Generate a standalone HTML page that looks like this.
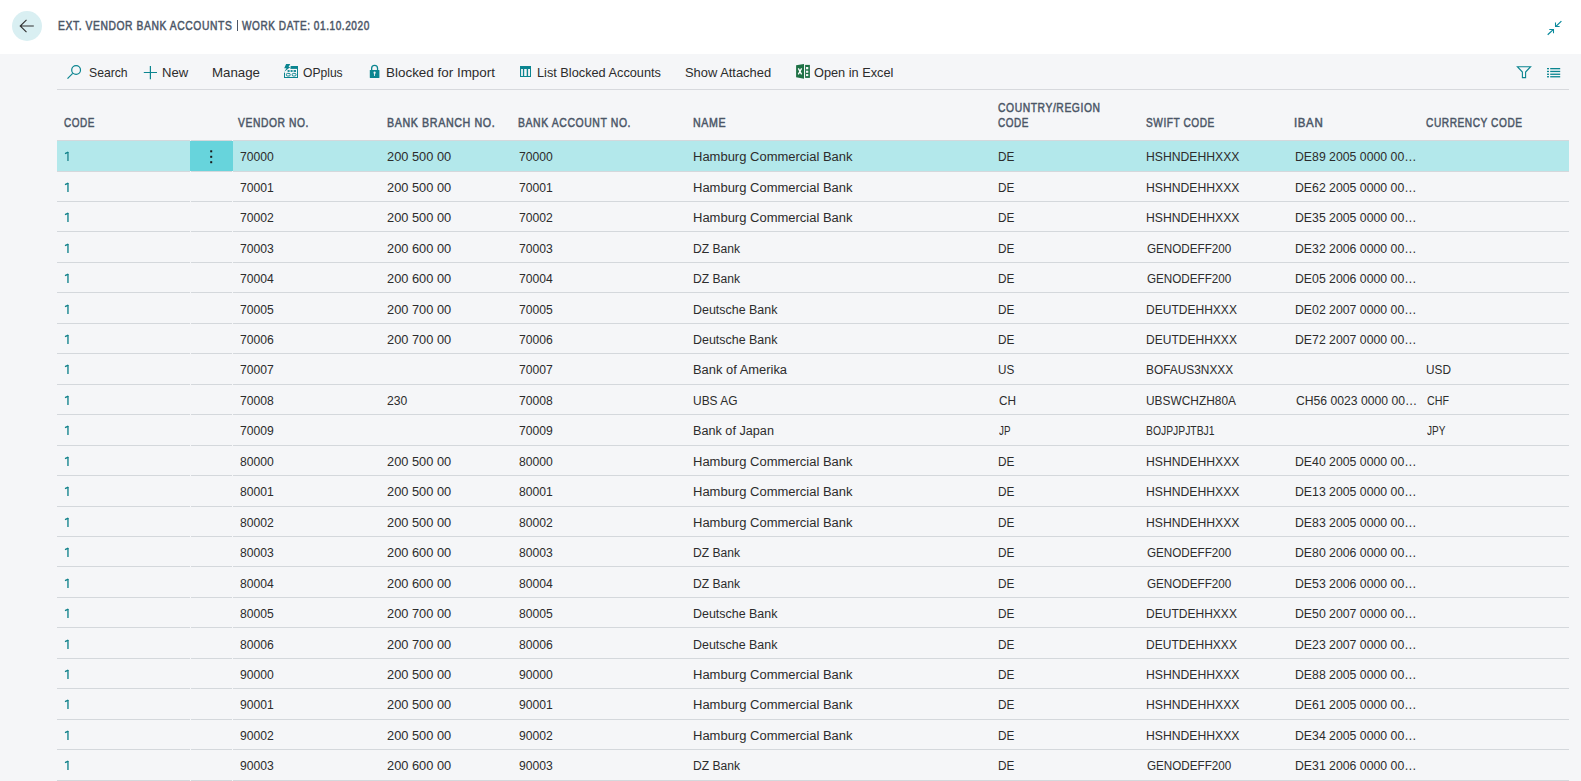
<!DOCTYPE html>
<html><head><meta charset="utf-8"><title>Ext. Vendor Bank Accounts</title>
<style>
html,body{margin:0;padding:0}
body{width:1581px;height:781px;overflow:hidden;position:relative;background:#f5f6f8;font-family:"Liberation Sans",sans-serif;}
.a{position:absolute;white-space:nowrap}
.hdrbar{position:absolute;left:0;top:0;width:1581px;height:54px;background:#fff}
.t{position:absolute;white-space:nowrap;font-size:12.5px;line-height:14px;color:#2c2c2c;transform-origin:0 0}
.lk{position:absolute;white-space:nowrap;font-size:12.5px;line-height:14px;color:#23888f}
.h{position:absolute;white-space:nowrap;font-size:12.5px;line-height:14px;color:#4b5667;font-weight:normal;-webkit-text-stroke:0.5px #4b5667;letter-spacing:0.7px;transform-origin:0 0}
.tb{position:absolute;white-space:nowrap;font-size:13px;line-height:15px;color:#2c2c2c;transform-origin:0 0}
.ln{position:absolute;height:1px;background:#d4d8dc}
svg{position:absolute;overflow:visible}
</style></head><body>
<div class="hdrbar"></div>

<div class="a" style="left:12px;top:11px;width:30px;height:30px;border-radius:50%;background:#d9eff2"></div>
<svg style="left:0;top:0" width="60" height="54"><path d="M26.5 19.8 L20.2 26 L26.5 32.2 M20.2 26 H33.8" fill="none" stroke="#323232" stroke-width="1.1"/></svg>
<div class="h" style="left:57.90px;top:19.00px;transform:scaleX(0.8251)">EXT. VENDOR BANK ACCOUNTS</div>
<div class="h" style="left:242.00px;top:19.00px;transform:scaleX(0.8038)">WORK DATE: 01.10.2020</div>
<div class="a" style="left:236.8px;top:20.2px;width:1.3px;height:10.6px;background:#4b5667"></div>
<svg style="left:0;top:0" width="1581" height="54"><g fill="none" stroke="#0a8a9c" stroke-width="1.25"><path d="M1561.4 21.1 L1555.9 26.4 M1547.7 34.7 L1553.2 29.6"/></g><g fill="none" stroke="#0a8a9c" stroke-width="1.05"><path d="M1555.5 22.6 V26.5 H1559.6 M1549.3 29.5 H1553.5 V33.2"/></g></svg>
<div class="tb" style="left:89.36px;top:65.00px;transform:scaleX(0.9375)">Search</div>
<div class="tb" style="left:161.99px;top:65.00px;transform:scaleX(1.0080)">New</div>
<div class="tb" style="left:212.18px;top:65.00px;transform:scaleX(1.0217)">Manage</div>
<div class="tb" style="left:302.70px;top:65.00px;transform:scaleX(0.9302)">OPplus</div>
<div class="tb" style="left:386.37px;top:65.00px;transform:scaleX(1.0333)">Blocked for Import</div>
<div class="tb" style="left:537.22px;top:65.00px;transform:scaleX(0.9800)">List Blocked Accounts</div>
<div class="tb" style="left:685.01px;top:65.00px;transform:scaleX(0.9929)">Show Attached</div>
<div class="tb" style="left:814.10px;top:65.00px;transform:scaleX(0.9812)">Open in Excel</div>
<svg style="left:0;top:0" width="1581" height="100">
<g fill="none" stroke="#0b8590" stroke-width="1.2">
<circle cx="76.1" cy="70" r="4.4"/>
<path d="M67.5 78.6 L72.7 73.4"/>
<path d="M143.8 72.5 H157 M150.4 65.9 V79.2"/>
</g>
<!-- OPplus icon -->
<g fill="#0b8590">
<rect x="290.4" y="66" width="7.6" height="2.9"/>
<rect x="297" y="66" width="1" height="12"/>
<rect x="284" y="77" width="14" height="1"/>
<rect x="284" y="72.6" width="1" height="5.4"/>
<rect x="287.6" y="70.1" width="2" height="1.8"/><rect x="290.6" y="70.1" width="2" height="1.8"/><rect x="293.6" y="70.1" width="2.4" height="1.8"/>
</g>
<g fill="none" stroke="#0b8590" stroke-width="1">
<rect x="286.4" y="73.4" width="3.8" height="2.6" rx="1.1"/><rect x="292.2" y="73.4" width="3.8" height="2.6" rx="1.1"/>
</g>
<path d="M286.1 64 H290.3 L288.5 66.9 H290.4 L284.3 71.8 L286.5 68.2 H284.2 Z" fill="#0b8590" stroke="#f5f6f8" stroke-width="0.8" paint-order="stroke" stroke-linejoin="round"/>
<!-- lock -->
<path d="M371.65 70.2 V68.3 A2.95 2.95 0 0 1 377.55 68.3 V70.2" fill="none" stroke="#0b8590" stroke-width="1.3"/>
<rect x="369.8" y="70" width="9.6" height="8" rx="0.6" fill="#0b8590"/>
<circle cx="374.6" cy="72.7" r="1.1" fill="#f5f6f8"/>
<path d="M374.1 72.7 H375.1 L375 76 H374.2 Z" fill="#f5f6f8"/>
<!-- list blocked icon -->
<rect x="520" y="66" width="11" height="11" fill="#0b8590"/>
<g fill="#f5f6f8"><rect x="521.1" y="69" width="1.8" height="7"/><rect x="524.2" y="69" width="2.5" height="7"/><rect x="528.1" y="69" width="1.9" height="7"/></g>
<!-- excel -->
<path d="M796.1 65.2 L804 64 V78.7 L796.1 77.3 Z" fill="#1e7145"/>
<rect x="805.1" y="64.9" width="4.8" height="13" fill="#1e7145"/>
<g fill="#f5f6f8"><rect x="806" y="67" width="2.3" height="2.3"/><rect x="806" y="70.7" width="2.3" height="2.1"/><rect x="806" y="74.1" width="2.3" height="2"/></g>
<path d="M798.3 68.4 L801.6 74.4 M801.6 68.4 L798.3 74.4" stroke="#fff" stroke-width="1.3"/>
<!-- filter -->
<path d="M1517.4 66.7 H1530.6 L1525.6 72 V77.6 H1522.4 V72 Z" fill="none" stroke="#0b8590" stroke-width="1.1" stroke-linejoin="miter"/>
<!-- list -->
<g fill="#0b8590">
<rect x="1547" y="68" width="2" height="1.3"/><rect x="1550.2" y="68" width="10" height="1.3"/>
<rect x="1547" y="70.8" width="2" height="1.3"/><rect x="1550.2" y="70.8" width="10" height="1.3"/>
<rect x="1547" y="73.6" width="2" height="1.3"/><rect x="1550.2" y="73.6" width="10" height="1.3"/>
<rect x="1547" y="76.1" width="2" height="1.3"/><rect x="1550.2" y="76.1" width="10" height="1.3"/>
</g>
</svg>
<div class="ln" style="left:57px;top:89px;width:1512px;background:#d7d9dd"></div>
<div class="h" style="left:63.50px;top:115.90px;transform:scaleX(0.7949)">CODE</div>
<div class="h" style="left:238.00px;top:115.90px;transform:scaleX(0.8235)">VENDOR NO.</div>
<div class="h" style="left:386.50px;top:115.90px;transform:scaleX(0.8560)">BANK BRANCH NO.</div>
<div class="h" style="left:517.60px;top:115.90px;transform:scaleX(0.8358)">BANK ACCOUNT NO.</div>
<div class="h" style="left:692.50px;top:115.90px;transform:scaleX(0.8513)">NAME</div>
<div class="h" style="left:997.60px;top:101.20px;transform:scaleX(0.8260)">COUNTRY/REGION</div>
<div class="h" style="left:997.60px;top:115.90px;transform:scaleX(0.7949)">CODE</div>
<div class="h" style="left:1146.00px;top:115.90px;transform:scaleX(0.8082)">SWIFT CODE</div>
<div class="h" style="left:1293.68px;top:115.90px;transform:scaleX(0.9167)">IBAN</div>
<div class="h" style="left:1425.50px;top:115.90px;transform:scaleX(0.8101)">CURRENCY CODE</div>
<div class="ln" style="left:57px;top:140px;width:133px"></div><div class="ln" style="left:191px;top:140px;width:41px"></div><div class="ln" style="left:233px;top:140px;width:1336px"></div>
<div class="a" style="left:57px;top:141px;width:1512px;height:30px;background:#b3e8eb"></div>
<div class="a" style="left:190px;top:141px;width:43px;height:30px;background:#67d4dc"></div>
<svg style="left:0;top:0" width="300" height="200"><g fill="#1a1a1a"><rect x="210.2" y="150.3" width="2" height="2"/><rect x="210.2" y="155.8" width="2" height="2"/><rect x="210.2" y="161.2" width="2" height="2"/></g></svg>
<div class="ln" style="left:57px;top:171px;width:133px"></div><div class="ln" style="left:191px;top:171px;width:41px"></div><div class="ln" style="left:233px;top:171px;width:1336px"></div>
<div class="t" style="left:239.50px;top:149.70px;transform:scaleX(0.9714)">70000</div>
<div class="t" style="left:387.10px;top:149.70px;transform:scaleX(1.0258)">200 500 00</div>
<div class="t" style="left:518.50px;top:149.70px;transform:scaleX(0.9714)">70000</div>
<div class="t" style="left:692.96px;top:149.70px;transform:scaleX(1.0392)">Hamburg Commercial Bank</div>
<div class="t" style="left:997.56px;top:149.70px;transform:scaleX(0.9437)">DE</div>
<div class="t" style="left:1145.53px;top:149.70px;transform:scaleX(0.9747)">HSHNDEHHXXX</div>
<div class="t" style="left:1295.32px;top:149.70px;transform:scaleX(0.9820)">DE89 2005 0000 00…</div>
<div class="ln" style="left:57px;top:201px;width:133px"></div><div class="ln" style="left:191px;top:201px;width:41px"></div><div class="ln" style="left:233px;top:201px;width:1336px"></div>
<div class="t" style="left:239.50px;top:180.70px;transform:scaleX(0.9714)">70001</div>
<div class="t" style="left:387.10px;top:180.70px;transform:scaleX(1.0258)">200 500 00</div>
<div class="t" style="left:518.50px;top:180.70px;transform:scaleX(0.9714)">70001</div>
<div class="t" style="left:692.96px;top:180.70px;transform:scaleX(1.0392)">Hamburg Commercial Bank</div>
<div class="t" style="left:997.56px;top:180.70px;transform:scaleX(0.9437)">DE</div>
<div class="t" style="left:1145.53px;top:180.70px;transform:scaleX(0.9747)">HSHNDEHHXXX</div>
<div class="t" style="left:1295.32px;top:180.70px;transform:scaleX(0.9820)">DE62 2005 0000 00…</div>
<div class="ln" style="left:57px;top:231px;width:133px"></div><div class="ln" style="left:191px;top:231px;width:41px"></div><div class="ln" style="left:233px;top:231px;width:1336px"></div>
<div class="t" style="left:239.50px;top:210.70px;transform:scaleX(0.9714)">70002</div>
<div class="t" style="left:387.10px;top:210.70px;transform:scaleX(1.0258)">200 500 00</div>
<div class="t" style="left:518.50px;top:210.70px;transform:scaleX(0.9714)">70002</div>
<div class="t" style="left:692.96px;top:210.70px;transform:scaleX(1.0392)">Hamburg Commercial Bank</div>
<div class="t" style="left:997.56px;top:210.70px;transform:scaleX(0.9437)">DE</div>
<div class="t" style="left:1145.53px;top:210.70px;transform:scaleX(0.9747)">HSHNDEHHXXX</div>
<div class="t" style="left:1295.32px;top:210.70px;transform:scaleX(0.9820)">DE35 2005 0000 00…</div>
<div class="ln" style="left:57px;top:262px;width:133px"></div><div class="ln" style="left:191px;top:262px;width:41px"></div><div class="ln" style="left:233px;top:262px;width:1336px"></div>
<div class="t" style="left:239.50px;top:241.70px;transform:scaleX(0.9714)">70003</div>
<div class="t" style="left:387.10px;top:241.70px;transform:scaleX(1.0258)">200 600 00</div>
<div class="t" style="left:518.50px;top:241.70px;transform:scaleX(0.9714)">70003</div>
<div class="t" style="left:693.03px;top:241.70px;transform:scaleX(0.9688)">DZ Bank</div>
<div class="t" style="left:997.56px;top:241.70px;transform:scaleX(0.9437)">DE</div>
<div class="t" style="left:1146.50px;top:241.70px;transform:scaleX(0.9333)">GENODEFF200</div>
<div class="t" style="left:1295.32px;top:241.70px;transform:scaleX(0.9820)">DE32 2006 0000 00…</div>
<div class="ln" style="left:57px;top:292px;width:133px"></div><div class="ln" style="left:191px;top:292px;width:41px"></div><div class="ln" style="left:233px;top:292px;width:1336px"></div>
<div class="t" style="left:239.50px;top:271.70px;transform:scaleX(0.9714)">70004</div>
<div class="t" style="left:387.10px;top:271.70px;transform:scaleX(1.0258)">200 600 00</div>
<div class="t" style="left:518.50px;top:271.70px;transform:scaleX(0.9714)">70004</div>
<div class="t" style="left:693.03px;top:271.70px;transform:scaleX(0.9688)">DZ Bank</div>
<div class="t" style="left:997.56px;top:271.70px;transform:scaleX(0.9437)">DE</div>
<div class="t" style="left:1146.50px;top:271.70px;transform:scaleX(0.9333)">GENODEFF200</div>
<div class="t" style="left:1295.32px;top:271.70px;transform:scaleX(0.9820)">DE05 2006 0000 00…</div>
<div class="ln" style="left:57px;top:323px;width:133px"></div><div class="ln" style="left:191px;top:323px;width:41px"></div><div class="ln" style="left:233px;top:323px;width:1336px"></div>
<div class="t" style="left:239.50px;top:302.70px;transform:scaleX(0.9714)">70005</div>
<div class="t" style="left:387.10px;top:302.70px;transform:scaleX(1.0258)">200 700 00</div>
<div class="t" style="left:518.50px;top:302.70px;transform:scaleX(0.9714)">70005</div>
<div class="t" style="left:693.00px;top:302.70px;transform:scaleX(0.9952)">Deutsche Bank</div>
<div class="t" style="left:997.56px;top:302.70px;transform:scaleX(0.9437)">DE</div>
<div class="t" style="left:1145.54px;top:302.70px;transform:scaleX(0.9624)">DEUTDEHHXXX</div>
<div class="t" style="left:1295.32px;top:302.70px;transform:scaleX(0.9820)">DE02 2007 0000 00…</div>
<div class="ln" style="left:57px;top:353px;width:133px"></div><div class="ln" style="left:191px;top:353px;width:41px"></div><div class="ln" style="left:233px;top:353px;width:1336px"></div>
<div class="t" style="left:239.50px;top:332.70px;transform:scaleX(0.9714)">70006</div>
<div class="t" style="left:387.10px;top:332.70px;transform:scaleX(1.0258)">200 700 00</div>
<div class="t" style="left:518.50px;top:332.70px;transform:scaleX(0.9714)">70006</div>
<div class="t" style="left:693.00px;top:332.70px;transform:scaleX(0.9952)">Deutsche Bank</div>
<div class="t" style="left:997.56px;top:332.70px;transform:scaleX(0.9437)">DE</div>
<div class="t" style="left:1145.54px;top:332.70px;transform:scaleX(0.9624)">DEUTDEHHXXX</div>
<div class="t" style="left:1295.32px;top:332.70px;transform:scaleX(0.9820)">DE72 2007 0000 00…</div>
<div class="ln" style="left:57px;top:384px;width:133px"></div><div class="ln" style="left:191px;top:384px;width:41px"></div><div class="ln" style="left:233px;top:384px;width:1336px"></div>
<div class="t" style="left:239.50px;top:362.70px;transform:scaleX(0.9714)">70007</div>
<div class="t" style="left:518.50px;top:362.70px;transform:scaleX(0.9714)">70007</div>
<div class="t" style="left:692.97px;top:362.70px;transform:scaleX(1.0333)">Bank of Amerika</div>
<div class="t" style="left:997.56px;top:362.70px;transform:scaleX(0.9375)">US</div>
<div class="t" style="left:1145.55px;top:362.70px;transform:scaleX(0.9505)">BOFAUS3NXXX</div>
<div class="t" style="left:1426.46px;top:362.70px;transform:scaleX(0.9440)">USD</div>
<div class="ln" style="left:57px;top:414px;width:133px"></div><div class="ln" style="left:191px;top:414px;width:41px"></div><div class="ln" style="left:233px;top:414px;width:1336px"></div>
<div class="t" style="left:239.50px;top:393.70px;transform:scaleX(0.9714)">70008</div>
<div class="t" style="left:387.10px;top:393.70px;transform:scaleX(0.9714)">230</div>
<div class="t" style="left:518.50px;top:393.70px;transform:scaleX(0.9714)">70008</div>
<div class="t" style="left:693.04px;top:393.70px;transform:scaleX(0.9556)">UBS AG</div>
<div class="t" style="left:998.50px;top:393.70px;transform:scaleX(0.9412)">CH</div>
<div class="t" style="left:1145.55px;top:393.70px;transform:scaleX(0.9521)">UBSWCHZH80A</div>
<div class="t" style="left:1296.30px;top:393.70px;transform:scaleX(0.9740)">CH56 0023 0000 00…</div>
<div class="t" style="left:1427.40px;top:393.70px;transform:scaleX(0.8538)">CHF</div>
<div class="ln" style="left:57px;top:445px;width:133px"></div><div class="ln" style="left:191px;top:445px;width:41px"></div><div class="ln" style="left:233px;top:445px;width:1336px"></div>
<div class="t" style="left:239.50px;top:423.70px;transform:scaleX(0.9714)">70009</div>
<div class="t" style="left:518.50px;top:423.70px;transform:scaleX(0.9714)">70009</div>
<div class="t" style="left:692.99px;top:423.70px;transform:scaleX(1.0127)">Bank of Japan</div>
<div class="t" style="left:998.50px;top:423.70px;transform:scaleX(0.7857)">JP</div>
<div class="t" style="left:1145.67px;top:423.70px;transform:scaleX(0.8293)">BOJPJPJTBJ1</div>
<div class="t" style="left:1427.40px;top:423.70px;transform:scaleX(0.8043)">JPY</div>
<div class="ln" style="left:57px;top:475px;width:133px"></div><div class="ln" style="left:191px;top:475px;width:41px"></div><div class="ln" style="left:233px;top:475px;width:1336px"></div>
<div class="t" style="left:239.50px;top:454.70px;transform:scaleX(0.9714)">80000</div>
<div class="t" style="left:387.10px;top:454.70px;transform:scaleX(1.0258)">200 500 00</div>
<div class="t" style="left:518.50px;top:454.70px;transform:scaleX(0.9714)">80000</div>
<div class="t" style="left:692.96px;top:454.70px;transform:scaleX(1.0392)">Hamburg Commercial Bank</div>
<div class="t" style="left:997.56px;top:454.70px;transform:scaleX(0.9437)">DE</div>
<div class="t" style="left:1145.53px;top:454.70px;transform:scaleX(0.9747)">HSHNDEHHXXX</div>
<div class="t" style="left:1295.32px;top:454.70px;transform:scaleX(0.9820)">DE40 2005 0000 00…</div>
<div class="ln" style="left:57px;top:506px;width:133px"></div><div class="ln" style="left:191px;top:506px;width:41px"></div><div class="ln" style="left:233px;top:506px;width:1336px"></div>
<div class="t" style="left:239.50px;top:484.70px;transform:scaleX(0.9714)">80001</div>
<div class="t" style="left:387.10px;top:484.70px;transform:scaleX(1.0258)">200 500 00</div>
<div class="t" style="left:518.50px;top:484.70px;transform:scaleX(0.9714)">80001</div>
<div class="t" style="left:692.96px;top:484.70px;transform:scaleX(1.0392)">Hamburg Commercial Bank</div>
<div class="t" style="left:997.56px;top:484.70px;transform:scaleX(0.9437)">DE</div>
<div class="t" style="left:1145.53px;top:484.70px;transform:scaleX(0.9747)">HSHNDEHHXXX</div>
<div class="t" style="left:1295.32px;top:484.70px;transform:scaleX(0.9820)">DE13 2005 0000 00…</div>
<div class="ln" style="left:57px;top:536px;width:133px"></div><div class="ln" style="left:191px;top:536px;width:41px"></div><div class="ln" style="left:233px;top:536px;width:1336px"></div>
<div class="t" style="left:239.50px;top:515.70px;transform:scaleX(0.9714)">80002</div>
<div class="t" style="left:387.10px;top:515.70px;transform:scaleX(1.0258)">200 500 00</div>
<div class="t" style="left:518.50px;top:515.70px;transform:scaleX(0.9714)">80002</div>
<div class="t" style="left:692.96px;top:515.70px;transform:scaleX(1.0392)">Hamburg Commercial Bank</div>
<div class="t" style="left:997.56px;top:515.70px;transform:scaleX(0.9437)">DE</div>
<div class="t" style="left:1145.53px;top:515.70px;transform:scaleX(0.9747)">HSHNDEHHXXX</div>
<div class="t" style="left:1295.32px;top:515.70px;transform:scaleX(0.9820)">DE83 2005 0000 00…</div>
<div class="ln" style="left:57px;top:566px;width:133px"></div><div class="ln" style="left:191px;top:566px;width:41px"></div><div class="ln" style="left:233px;top:566px;width:1336px"></div>
<div class="t" style="left:239.50px;top:545.70px;transform:scaleX(0.9714)">80003</div>
<div class="t" style="left:387.10px;top:545.70px;transform:scaleX(1.0258)">200 600 00</div>
<div class="t" style="left:518.50px;top:545.70px;transform:scaleX(0.9714)">80003</div>
<div class="t" style="left:693.03px;top:545.70px;transform:scaleX(0.9688)">DZ Bank</div>
<div class="t" style="left:997.56px;top:545.70px;transform:scaleX(0.9437)">DE</div>
<div class="t" style="left:1146.50px;top:545.70px;transform:scaleX(0.9333)">GENODEFF200</div>
<div class="t" style="left:1295.32px;top:545.70px;transform:scaleX(0.9820)">DE80 2006 0000 00…</div>
<div class="ln" style="left:57px;top:597px;width:133px"></div><div class="ln" style="left:191px;top:597px;width:41px"></div><div class="ln" style="left:233px;top:597px;width:1336px"></div>
<div class="t" style="left:239.50px;top:576.70px;transform:scaleX(0.9714)">80004</div>
<div class="t" style="left:387.10px;top:576.70px;transform:scaleX(1.0258)">200 600 00</div>
<div class="t" style="left:518.50px;top:576.70px;transform:scaleX(0.9714)">80004</div>
<div class="t" style="left:693.03px;top:576.70px;transform:scaleX(0.9688)">DZ Bank</div>
<div class="t" style="left:997.56px;top:576.70px;transform:scaleX(0.9437)">DE</div>
<div class="t" style="left:1146.50px;top:576.70px;transform:scaleX(0.9333)">GENODEFF200</div>
<div class="t" style="left:1295.32px;top:576.70px;transform:scaleX(0.9820)">DE53 2006 0000 00…</div>
<div class="ln" style="left:57px;top:627px;width:133px"></div><div class="ln" style="left:191px;top:627px;width:41px"></div><div class="ln" style="left:233px;top:627px;width:1336px"></div>
<div class="t" style="left:239.50px;top:606.70px;transform:scaleX(0.9714)">80005</div>
<div class="t" style="left:387.10px;top:606.70px;transform:scaleX(1.0258)">200 700 00</div>
<div class="t" style="left:518.50px;top:606.70px;transform:scaleX(0.9714)">80005</div>
<div class="t" style="left:693.00px;top:606.70px;transform:scaleX(0.9952)">Deutsche Bank</div>
<div class="t" style="left:997.56px;top:606.70px;transform:scaleX(0.9437)">DE</div>
<div class="t" style="left:1145.54px;top:606.70px;transform:scaleX(0.9624)">DEUTDEHHXXX</div>
<div class="t" style="left:1295.32px;top:606.70px;transform:scaleX(0.9820)">DE50 2007 0000 00…</div>
<div class="ln" style="left:57px;top:658px;width:133px"></div><div class="ln" style="left:191px;top:658px;width:41px"></div><div class="ln" style="left:233px;top:658px;width:1336px"></div>
<div class="t" style="left:239.50px;top:637.70px;transform:scaleX(0.9714)">80006</div>
<div class="t" style="left:387.10px;top:637.70px;transform:scaleX(1.0258)">200 700 00</div>
<div class="t" style="left:518.50px;top:637.70px;transform:scaleX(0.9714)">80006</div>
<div class="t" style="left:693.00px;top:637.70px;transform:scaleX(0.9952)">Deutsche Bank</div>
<div class="t" style="left:997.56px;top:637.70px;transform:scaleX(0.9437)">DE</div>
<div class="t" style="left:1145.54px;top:637.70px;transform:scaleX(0.9624)">DEUTDEHHXXX</div>
<div class="t" style="left:1295.32px;top:637.70px;transform:scaleX(0.9820)">DE23 2007 0000 00…</div>
<div class="ln" style="left:57px;top:688px;width:133px"></div><div class="ln" style="left:191px;top:688px;width:41px"></div><div class="ln" style="left:233px;top:688px;width:1336px"></div>
<div class="t" style="left:239.50px;top:667.70px;transform:scaleX(0.9714)">90000</div>
<div class="t" style="left:387.10px;top:667.70px;transform:scaleX(1.0258)">200 500 00</div>
<div class="t" style="left:518.50px;top:667.70px;transform:scaleX(0.9714)">90000</div>
<div class="t" style="left:692.96px;top:667.70px;transform:scaleX(1.0392)">Hamburg Commercial Bank</div>
<div class="t" style="left:997.56px;top:667.70px;transform:scaleX(0.9437)">DE</div>
<div class="t" style="left:1145.53px;top:667.70px;transform:scaleX(0.9747)">HSHNDEHHXXX</div>
<div class="t" style="left:1295.32px;top:667.70px;transform:scaleX(0.9820)">DE88 2005 0000 00…</div>
<div class="ln" style="left:57px;top:719px;width:133px"></div><div class="ln" style="left:191px;top:719px;width:41px"></div><div class="ln" style="left:233px;top:719px;width:1336px"></div>
<div class="t" style="left:239.50px;top:697.70px;transform:scaleX(0.9714)">90001</div>
<div class="t" style="left:387.10px;top:697.70px;transform:scaleX(1.0258)">200 500 00</div>
<div class="t" style="left:518.50px;top:697.70px;transform:scaleX(0.9714)">90001</div>
<div class="t" style="left:692.96px;top:697.70px;transform:scaleX(1.0392)">Hamburg Commercial Bank</div>
<div class="t" style="left:997.56px;top:697.70px;transform:scaleX(0.9437)">DE</div>
<div class="t" style="left:1145.53px;top:697.70px;transform:scaleX(0.9747)">HSHNDEHHXXX</div>
<div class="t" style="left:1295.32px;top:697.70px;transform:scaleX(0.9820)">DE61 2005 0000 00…</div>
<div class="ln" style="left:57px;top:749px;width:133px"></div><div class="ln" style="left:191px;top:749px;width:41px"></div><div class="ln" style="left:233px;top:749px;width:1336px"></div>
<div class="t" style="left:239.50px;top:728.70px;transform:scaleX(0.9714)">90002</div>
<div class="t" style="left:387.10px;top:728.70px;transform:scaleX(1.0258)">200 500 00</div>
<div class="t" style="left:518.50px;top:728.70px;transform:scaleX(0.9714)">90002</div>
<div class="t" style="left:692.96px;top:728.70px;transform:scaleX(1.0392)">Hamburg Commercial Bank</div>
<div class="t" style="left:997.56px;top:728.70px;transform:scaleX(0.9437)">DE</div>
<div class="t" style="left:1145.53px;top:728.70px;transform:scaleX(0.9747)">HSHNDEHHXXX</div>
<div class="t" style="left:1295.32px;top:728.70px;transform:scaleX(0.9820)">DE34 2005 0000 00…</div>
<div class="ln" style="left:57px;top:780px;width:133px"></div><div class="ln" style="left:191px;top:780px;width:41px"></div><div class="ln" style="left:233px;top:780px;width:1336px"></div>
<div class="t" style="left:239.50px;top:758.70px;transform:scaleX(0.9714)">90003</div>
<div class="t" style="left:387.10px;top:758.70px;transform:scaleX(1.0258)">200 600 00</div>
<div class="t" style="left:518.50px;top:758.70px;transform:scaleX(0.9714)">90003</div>
<div class="t" style="left:693.03px;top:758.70px;transform:scaleX(0.9688)">DZ Bank</div>
<div class="t" style="left:997.56px;top:758.70px;transform:scaleX(0.9437)">DE</div>
<div class="t" style="left:1146.50px;top:758.70px;transform:scaleX(0.9333)">GENODEFF200</div>
<div class="t" style="left:1295.32px;top:758.70px;transform:scaleX(0.9820)">DE31 2006 0000 00…</div>
<svg style="left:0;top:0" width="100" height="781"><path d="M67.95 151.9 V160.9 M67.95 182.9 V191.9 M67.95 212.9 V221.9 M67.95 243.9 V252.9 M67.95 273.9 V282.9 M67.95 304.9 V313.9 M67.95 334.9 V343.9 M67.95 364.9 V373.9 M67.95 395.9 V404.9 M67.95 425.9 V434.9 M67.95 456.9 V465.9 M67.95 486.9 V495.9 M67.95 517.9 V526.9 M67.95 547.9 V556.9 M67.95 578.9 V587.9 M67.95 608.9 V617.9 M67.95 639.9 V648.9 M67.95 669.9 V678.9 M67.95 699.9 V708.9 M67.95 730.9 V739.9 M67.95 760.9 V769.9 " fill="none" stroke="#3f9aa2" stroke-width="1.7"/><path d="M65 153.7 L68.3 152.1 M65 184.7 L68.3 183.1 M65 214.7 L68.3 213.1 M65 245.7 L68.3 244.1 M65 275.7 L68.3 274.1 M65 306.7 L68.3 305.1 M65 336.7 L68.3 335.1 M65 366.7 L68.3 365.1 M65 397.7 L68.3 396.1 M65 427.7 L68.3 426.1 M65 458.7 L68.3 457.1 M65 488.7 L68.3 487.1 M65 519.7 L68.3 518.1 M65 549.7 L68.3 548.1 M65 580.7 L68.3 579.1 M65 610.7 L68.3 609.1 M65 641.7 L68.3 640.1 M65 671.7 L68.3 670.1 M65 701.7 L68.3 700.1 M65 732.7 L68.3 731.1 M65 762.7 L68.3 761.1 " fill="none" stroke="#0f8089" stroke-width="1.4"/></svg>
</body></html>
